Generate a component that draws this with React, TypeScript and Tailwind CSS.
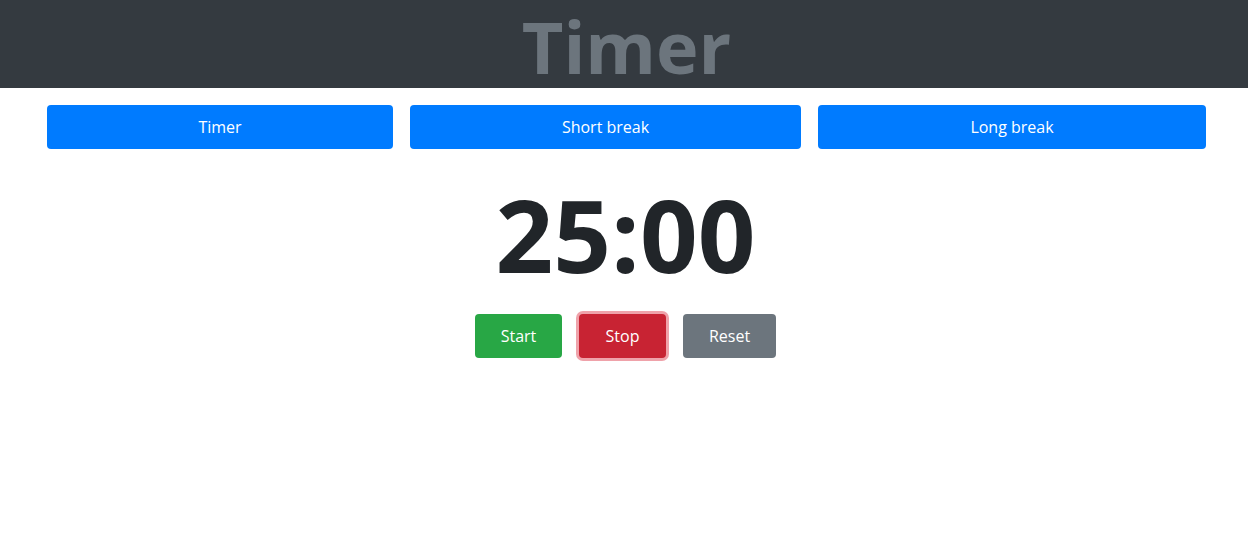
import React, { useState } from "react";

const font = { fontFamily: '"Open Sans", "Noto Sans", sans-serif' };

export default function App() {
  const [mode, setMode] = useState("Timer");
  const modes = [
    { label: "Timer", w: "w-[346px]" },
    { label: "Short break", w: "w-[391px]" },
    { label: "Long break", w: "w-[388px]" },
  ];

  return (
    <div className="min-h-[537px] bg-white" style={font}>
      <header className="h-[88px] bg-[#343a40] flex items-center justify-center">
        <h1 className="text-[72px] font-bold leading-[80px] text-[#6c757d] pl-[5px] pt-[4px]">
          Timer
        </h1>
      </header>

      <div className="flex gap-[17px] pl-[47px] pt-[17px]">
        {modes.map((m) => (
          <button
            key={m.label}
            onClick={() => setMode(m.label)}
            className={`${m.w} h-[44px] rounded bg-[#007bff] text-white text-[16px] leading-none`}
            data-active={mode === m.label}
          >
            {m.label}
          </button>
        ))}
      </div>

      <div className="flex justify-center pt-[21px]">
        <div className="text-[101px] font-bold leading-[128px] text-[#212529] pl-[3px]">
          25:00
        </div>
      </div>

      <div className="flex justify-center gap-[17px] pt-[16px] pl-[3px]">
        <button className="w-[87px] h-[44px] rounded bg-[#28a745] text-white text-[16px]">
          Start
        </button>
        <button className="w-[87px] h-[44px] rounded bg-[#c82333] text-white text-[16px] ring-[3px] ring-[#efa2aa]">
          Stop
        </button>
        <button className="w-[93px] h-[44px] rounded bg-[#6c757d] text-white text-[16px]">
          Reset
        </button>
      </div>
    </div>
  );
}
